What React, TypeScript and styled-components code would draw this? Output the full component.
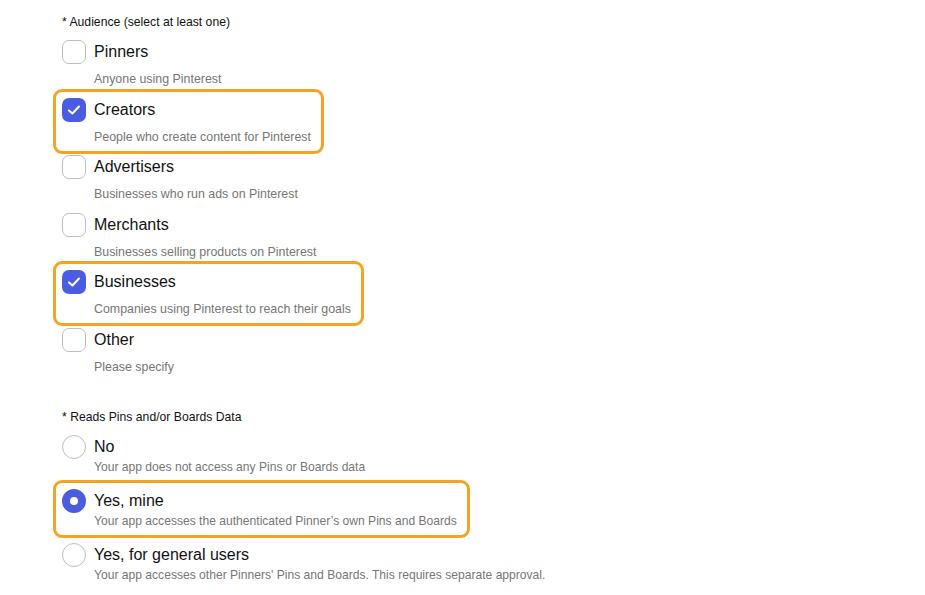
import { createGlobalStyle, styled } from "styled-components";

type Option = { label: string; desc: string; checked?: boolean };

const audience: Option[] = [
  { label: "Pinners", desc: "Anyone using Pinterest" },
  { label: "Creators", desc: "People who create content for Pinterest", checked: true },
  { label: "Advertisers", desc: "Businesses who run ads on Pinterest" },
  { label: "Merchants", desc: "Businesses selling products on Pinterest" },
  { label: "Businesses", desc: "Companies using Pinterest to reach their goals", checked: true },
  { label: "Other", desc: "Please specify" },
];

const readsPins: Option[] = [
  { label: "No", desc: "Your app does not access any Pins or Boards data" },
  {
    label: "Yes, mine",
    desc: "Your app accesses the authenticated Pinner’s own Pins and Boards",
    checked: true,
  },
  {
    label: "Yes, for general users",
    desc: "Your app accesses other Pinners' Pins and Boards. This requires separate approval.",
  },
];

const App = () => {
  return (
    <>
      <GlobalStyle />
      <Page>
        <Section>
          <Heading>* Audience (select at least one)</Heading>
          <List $overlap={7.4}>
            {audience.map((o) => (
              <Item key={o.label} $active={!!o.checked}>
                <Row>
                  <CheckBox $checked={!!o.checked}>
                    {o.checked && (
                      <svg width="16" height="16" viewBox="0 0 16 16">
                        <path
                          d="M3 8.4 L6.4 11.5 L13 4.5"
                          fill="none"
                          stroke="#fff"
                          strokeWidth="2"
                          strokeLinecap="round"
                          strokeLinejoin="round"
                        />
                      </svg>
                    )}
                  </CheckBox>
                  <Label>{o.label}</Label>
                </Row>
                <Desc $spaced>{o.desc}</Desc>
              </Item>
            ))}
          </List>
        </Section>
        <Section>
          <Heading>* Reads Pins and/or Boards Data</Heading>
          <List $overlap={4}>
            {readsPins.map((o) => (
              <Item key={o.label} $active={!!o.checked}>
                <Row>
                  <Radio $checked={!!o.checked} />
                  <Label>{o.label}</Label>
                </Row>
                <Desc $spaced={false}>{o.desc}</Desc>
              </Item>
            ))}
          </List>
        </Section>
      </Page>
    </>
  );
};

export default App;

const GlobalStyle = createGlobalStyle`
  body {
    margin: 0;
    background: #ffffff;
    font-family: "Liberation Sans", Arial, sans-serif;
    color: #111111;
  }
`;

const Page = styled.div`
  display: flex;
  flex-direction: column;
  gap: 25px;
  padding: 14px 0 0 53px;
`;

const Section = styled.div`
  display: flex;
  flex-direction: column;
  gap: 1px;
`;

const Heading = styled.div`
  font-size: 12.2px;
  line-height: 16px;
  padding-left: 9px;
  color: #111;
`;

const List = styled.div<{ $overlap: number }>`
  display: flex;
  flex-direction: column;
  align-items: flex-start;

  & > * + * {
    margin-top: ${({ $overlap }) => -$overlap}px;
  }
`;

const Item = styled.div<{ $active: boolean }>`
  display: flex;
  flex-direction: column;
  padding: 6px 10px 6px 6px;
  border: 3px solid ${({ $active }) => ($active ? "#f4a325" : "transparent")};
  border-radius: 9px;
`;

const Row = styled.div`
  display: flex;
  align-items: center;
  gap: 8px;
  height: 24px;
`;

const CheckBox = styled.div<{ $checked: boolean }>`
  width: 24px;
  height: 24px;
  box-sizing: border-box;
  border-radius: 7px;
  display: flex;
  align-items: center;
  justify-content: center;
  background: ${({ $checked }) => ($checked ? "#4a5ce0" : "#fff")};
  border: ${({ $checked }) => ($checked ? "none" : "1px solid #bdbdbd")};
`;

const Radio = styled.div<{ $checked: boolean }>`
  width: 24px;
  height: 24px;
  box-sizing: border-box;
  border-radius: 50%;
  background: #fff;
  border: ${({ $checked }) => ($checked ? "8px solid #4a5ce0" : "1px solid #bdbdbd")};
`;

const Label = styled.span`
  font-size: 16px;
  line-height: 24px;
  color: #111;
`;

const Desc = styled.div<{ $spaced: boolean }>`
  font-size: ${({ $spaced }) => ($spaced ? "12.4px" : "12.1px")};
  line-height: 16px;
  color: #767676;
  padding-left: 32px;
  margin-top: ${({ $spaced }) => ($spaced ? "7px" : "0")};
`;
